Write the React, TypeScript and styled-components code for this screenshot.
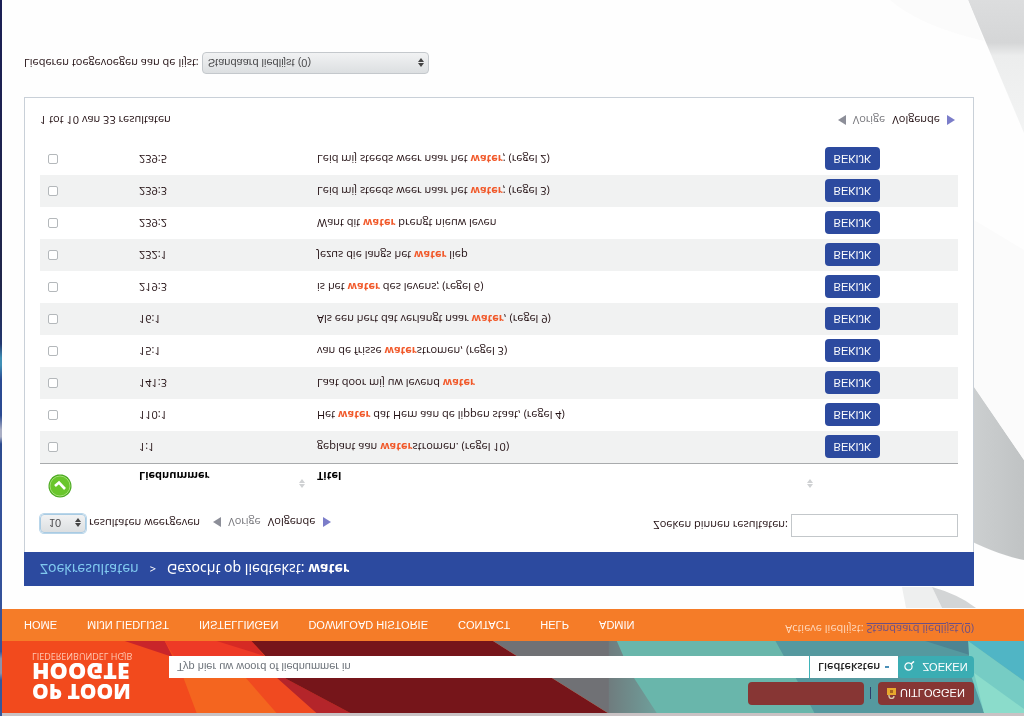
import React from 'react';
import styled, { createGlobalStyle } from 'styled-components';

const controlFont = '"Liberation Sans", Arial, sans-serif';

const GlobalStyle = createGlobalStyle`
  * { box-sizing: border-box; }
  body {
    margin: 0;
    background: #fefefe;
    color: #200d10;
    font-family: "Open Sans", "Noto Sans", sans-serif;
    font-size: 11px;
    line-height: 16px;
  }
  button, input, select { font: inherit; color: inherit; margin: 0; }
`;

/* The whole page is mirrored over its horizontal axis. */
const Page = styled.div`
  position: relative;
  display: flex;
  flex-direction: column;
  min-height: 100vh;
  padding-left: 2px;
  transform: scaleY(-1);
  background: linear-gradient(
      #34579c 0 5%, #8b93ad 6% 8%, #34529a 9% 30%, #2c4a8e 38%,
      #a9aec4 39% 40%, #2a4a92 42% 47%, #3f8fb5 49% 50%, #23376f 52%,
      #20264a 60%, #1b1f55 100%
    ) left / 2px 100% no-repeat;
`;

const Backdrop = styled.svg`
  position: absolute;
  inset: 0;
  width: 100%;
  height: 100%;
  z-index: -1;
`;

const Header = styled.header`
  position: relative;
  display: grid;
  grid-template-columns: 137px 1fr;
  border-top: 3px solid #c9c2c4;
  padding: 8px 50px 0 30px;
  height: 75px;
  color: #fff;
`;

const Logo = styled.a`
  display: flex;
  flex-direction: column;
  padding-top: 3px;
  color: #fff;
  text-decoration: none;
  font: 800 21px/20px "Open Sans", sans-serif;
`;

const LogoLarge = styled.span`
  font-size: 23px;
`;

const LogoSub = styled.small`
  font: 400 9px/12px "Open Sans", sans-serif;
  color: #ffc9b4;
`;

const HeaderTools = styled.div`
  display: flex;
  flex-direction: column;
  gap: 4px;
`;

const AccountRow = styled.div`
  display: flex;
  justify-content: flex-end;
  align-items: center;
  gap: 6px;
  height: 23px;
`;

const UserBadge = styled.div`
  width: 116px;
  height: 23px;
  border-radius: 4px;
  background: #873634;
`;

const Separator = styled.span`
  width: 1px;
  height: 12px;
  margin-right: 1px;
  background: #2c3f6c;
`;

const LogoutButton = styled.button`
  display: flex;
  align-items: center;
  justify-content: center;
  gap: 4px;
  width: 96px;
  height: 23px;
  border: 0;
  padding: 0;
  border-radius: 4px;
  background: #873634;
  color: #fff;
  font-family: ${controlFont};
`;

const SearchForm = styled.form`
  display: flex;
  height: 22px;
`;

const SearchInput = styled.input`
  flex: 1;
  min-width: 0;
  border: 0;
  padding: 0 8px;
  background: #fff;
  color: #333;
  font-family: ${controlFont};
  &::placeholder { color: #6c7279; opacity: 1; }
`;

const ScopeWrap = styled.div`
  position: relative;
  display: flex;
  align-items: center;
  width: 89px;
  background: #fff;
  border-left: 1px solid #3fb3b8;
  color: #222;
`;

const ScopeSelect = styled.select`
  appearance: none;
  width: 100%;
  height: 22px;
  border: 0;
  padding: 0 8px;
  background: transparent;
  font-weight: 600;
`;

const ScopeMark = styled.span`
  position: absolute;
  right: 9px;
  width: 4px;
  height: 2px;
  background: #4a90b8;
  pointer-events: none;
`;

const SearchButton = styled.button`
  display: flex;
  align-items: center;
  justify-content: center;
  gap: 7px;
  width: 76px;
  border: 0;
  padding: 0;
  border-radius: 4px;
  background: #3badb3;
  color: #fff;
  font-family: ${controlFont};
`;

const Nav = styled.nav`
  display: flex;
  align-items: center;
  gap: 30px;
  height: 32px;
  padding: 0 50px 0 22px;
  background: #f57c28;
`;

const NavLink = styled.a`
  color: #fff;
  text-decoration: none;
  white-space: nowrap;
  font-family: ${controlFont};
`;

const ActiveList = styled.p`
  margin: 0 0 0 auto;
  padding-bottom: 9px;
  color: #ffd9bd;
  white-space: nowrap;
  a { color: #6b4f86; }
`;

const Main = styled.main`
  padding: 23px 50px 0 22px;
`;

const TitleBar = styled.h1`
  display: flex;
  align-items: center;
  gap: 11px;
  height: 34px;
  margin: 0;
  padding: 0 16px;
  background: #2c4a9f;
  color: #fff;
  font: 400 14px/20px "Noto Sans", sans-serif;
  a { color: #7fc8ee; text-decoration: none; }
  small { font-size: 11px; }
`;

const Panel = styled.section`
  border: 1px solid #c9d0d8;
  border-top: 0;
  padding: 15px 15px 14px;
  background: #fff;
`;

const Toolbar = styled.div`
  display: flex;
  align-items: flex-end;
  height: 23px;
  margin-bottom: 14px;
`;

const Field = styled.label`
  display: flex;
  align-items: center;
  gap: 3px;
  white-space: nowrap;
`;

const SelectWrap = styled.span<{ $width: number; $height: number }>`
  position: relative;
  display: flex;
  width: ${(p) => p.$width}px;
  height: ${(p) => p.$height}px;
  svg { position: absolute; right: 5px; top: 50%; margin-top: -4px; pointer-events: none; }
`;

const GreySelect = styled.select<{ $focus?: boolean }>`
  appearance: none;
  width: 100%;
  border: 1px solid ${(p) => (p.$focus ? '#a9cbe3' : '#c4c8cc')};
  box-shadow: ${(p) => (p.$focus ? '0 0 0 1px #b9d6ea' : 'none')};
  border-radius: 4px;
  padding: 0 ${(p) => (p.$focus ? 8 : 5)}px;
  background: linear-gradient(#dcdfe1, #f1f2f3);
  color: #4c4c4e;
  font-family: ${controlFont};
`;

const Pager = styled.nav`
  display: flex;
  align-items: center;
  gap: 7px;
`;

const PagerButton = styled.button<{ $muted?: boolean }>`
  display: flex;
  align-items: center;
  gap: 6px;
  border: 0;
  padding: 0;
  background: none;
  color: ${(p) => (p.$muted ? '#77777c' : '#200d10')};
`;

const FilterInput = styled.input`
  width: 167px;
  height: 23px;
  border: 1px solid #c3c7ca;
  padding: 0 6px;
  background: #fff;
`;

const Table = styled.table`
  width: 100%;
  table-layout: fixed;
  border-collapse: separate;
  border-spacing: 0;
  th, td { padding: 0; text-align: left; }
  th { height: 37px; vertical-align: top; border-bottom: 1px solid #a9abad; color: #000; }
  td { height: 32px; }
  tbody tr:nth-child(odd) { background: #f1f2f2; }
  mark { background: none; color: #f1592a; font-weight: 700; }
`;

const Column = styled.col<{ $width?: number }>`
  width: ${(p) => (p.$width ? `${p.$width}px` : 'auto')};
`;

const SortHead = styled.div`
  display: flex;
  align-items: flex-start;
  justify-content: space-between;
  padding: 12px 12px 0 0;
  span { padding-top: 4px; }
`;

const SelectAll = styled.button`
  display: block;
  border: 0;
  margin: 2px 0 0 8px;
  padding: 0;
  background: none;
  svg { display: block; }
`;

const RowCheck = styled.input`
  appearance: none;
  display: block;
  width: 10px;
  height: 10px;
  margin-left: 8px;
  border: 1px solid #b4b8bb;
  border-radius: 2px;
  background: #fff;
`;

const ViewButton = styled.button`
  display: block;
  width: 55px;
  height: 23px;
  border: 0;
  padding: 0;
  border-radius: 4px;
  background: #2c4a9f;
  color: #fff;
  font-family: ${controlFont};
`;

const Summary = styled.div`
  display: flex;
  align-items: center;
  justify-content: space-between;
  height: 16px;
  margin-top: 15px;
  padding-right: 3px;
`;

const AddRow = styled.div`
  padding: 23px 0 28px;
  display: flex;
`;

type Part = string | { hit: string };
const w: Part = { hit: 'water' };

const songs: { number: string; title: Part[] }[] = [
  { number: '1:1', title: ['geplant aan ', w, 'stromen. (regel 10)'] },
  { number: '110:1', title: ['Het ', w, ' dat Hem aan de lippen staat, (regel 4)'] },
  { number: '141:3', title: ['Laat door mij uw levend ', w] },
  { number: '15:1', title: ['van de frisse ', w, 'stromen, (regel 3)'] },
  { number: '16:1', title: ['Als een hert dat verlangt naar ', w, ', (regel 9)'] },
  { number: '219:3', title: ['is het ', w, ' des levens; (regel 6)'] },
  { number: '232:1', title: ['Jezus die langs het ', w, ' liep'] },
  { number: '239:2', title: ['Want dit ', w, ' brengt nieuw leven'] },
  { number: '239:3', title: ['Leid mij steeds weer naar het ', w, '; (regel 3)'] },
  { number: '239:5', title: ['Leid mij steeds weer naar het ', w, '; (regel 2)'] },
];

const menu = ['HOME', 'MIJN LIEDLIJST', 'INSTELLINGEN', 'DOWNLOAD HISTORIE', 'CONTACT', 'HELP', 'ADMIN'];

const PageShapes = () => (
  <Backdrop viewBox="0 0 1024 716" preserveAspectRatio="none" aria-hidden="true">
    <defs>
      <linearGradient id="corner" x1="0" y1="0" x2="0" y2="1">
        <stop offset="0" stopColor="#f3f4f4" />
        <stop offset="0.58" stopColor="#eceded" />
        <stop offset="0.68" stopColor="#d5d6d7" />
        <stop offset="1" stopColor="#dcddde" />
      </linearGradient>
      <linearGradient id="fold" x1="0" y1="0" x2="1" y2="0">
        <stop offset="0" stopColor="#cfd2d3" />
        <stop offset="1" stopColor="#c0c3c4" />
      </linearGradient>
    </defs>
    <path d="M902 129 L932 129 L942 108 L906 108Z" fill="#eeefef" />
    <path d="M932 129 Q958 122 976 108 L942 108Z" fill="#d3d5d6" />
    <path d="M960 350 L1024 256 L1024 156 Q1000 160 960 180Z" fill="url(#fold)" />
    <path d="M974 329 L1024 256 L1024 466 L974 496Z" fill="#fbfbfb" />
    <path d="M968 716 L1024 716 L1024 583Z" fill="url(#corner)" />
    <path d="M890 716 L968 716 L984 675 Q920 690 890 716Z" fill="#fbfbfb" />
  </Backdrop>
);

const HeaderShapes = () => (
  <Backdrop viewBox="0 0 1024 72" preserveAspectRatio="none" aria-hidden="true">
    <defs>
      <linearGradient id="haze" x1="0" y1="0" x2="1" y2="0">
        <stop offset="0" stopColor="#6f7c7e" />
        <stop offset="1" stopColor="#6f9f9b" />
      </linearGradient>
    </defs>
    <path d="M0 0H620V72H0Z" fill="#f24a1d" />
    <path d="M195 0 L180 40 L240 40 L298 0Z" fill="#f4651f" />
    <path d="M240 40 L285 34 L317 0 L275 0Z" fill="#f04a20" />
    <path d="M123 72H163L171 56Z" fill="#c9252a" />
    <path d="M163 72H250L270 48H178Z" fill="#ee3a26" />
    <path d="M215 72H250L263 57Z" fill="#d62a24" />
    <path d="M275 45 L285 34 L349 0 L315 0 L270 40Z" fill="#b4252a" />
    <path d="M250 72H492L607 0H349L285 34Z" fill="#76151a" />
    <path d="M492 72H616V0H607Z" fill="#707175" />
    <path d="M610 0H1024V72H614L608 40Z" fill="#69b6ab" />
    <path d="M608 0H656L630 40L616 72H608Z" fill="url(#haze)" />
    <path d="M775 72H968L984 0H814L790 45Z" fill="#55999f" />
    <path d="M925 72H968L976 56Z" fill="#4d8492" />
    <path d="M968 72H1024V32Z" fill="#50b5c5" />
    <path d="M968 72L1024 32V0H984L970 40Z" fill="#76ccc4" />
    <path d="M974 40L1024 4V0H984Z" fill="#8bdccb" />
  </Backdrop>
);

const Arrow = ({ left }: { left?: boolean }) => (
  <svg width="9" height="10" viewBox="0 0 9 10" aria-hidden="true">
    <path d={left ? 'M8 0V10L0 5Z' : 'M1 0V10L9 5Z'} fill={left ? '#8c8e98' : '#7b7dc9'} />
  </svg>
);

const UpDown = ({ color = '#444' }: { color?: string }) => (
  <svg width="6" height="9" viewBox="0 0 6 9" aria-hidden="true">
    <path d="M3 0L6 4H0ZM0 5H6L3 9Z" fill={color} />
  </svg>
);

const PageButtons = () => (
  <Pager aria-label="Pagina's">
    <PagerButton type="button" $muted><Arrow left />Vorige</PagerButton>
    <PagerButton type="button">Volgende<Arrow /></PagerButton>
  </Pager>
);

const CountField = styled(Field)`
  margin-right: 13px;
`;

const FilterField = styled(Field)`
  margin-left: auto;
`;

export default function App() {
  return (
    <Page>
      <GlobalStyle />
      <PageShapes />
      <Header>
        <HeaderShapes />
        <Logo href="#">
          <span>OP TOON</span>
          <LogoLarge>HOOGTE</LogoLarge>
          <LogoSub>LIEDERENBUNDEL HGJB</LogoSub>
        </Logo>
        <HeaderTools>
          <AccountRow>
            <UserBadge />
            <Separator />
            <LogoutButton type="button">
              <svg width="9" height="11" viewBox="0 0 9 11" aria-hidden="true">
                <path d="M2 5V3a2.5 2.5 0 0 1 5 0" fill="none" stroke="#d9c9a8" strokeWidth="1.4" />
                <path d="M0 4H9V11H0Z" fill="#e8a82c" />
                <path d="M3 6H6V9H3Z" fill="#a8641e" />
              </svg>
              UITLOGGEN
            </LogoutButton>
          </AccountRow>
          <SearchForm onSubmit={(e) => e.preventDefault()}>
            <SearchInput aria-label="Zoeken" placeholder="Typ hier uw woord of liednummer in" />
            <ScopeWrap>
              <ScopeSelect aria-label="Zoeken in">
                <option>Liedteksten</option>
              </ScopeSelect>
              <ScopeMark />
            </ScopeWrap>
            <SearchButton type="submit">
              <svg width="11" height="11" viewBox="0 0 11 11" aria-hidden="true">
                <circle cx="4.5" cy="5.5" r="3.6" fill="none" stroke="#fff" strokeWidth="1.2" />
                <path d="M7 8L10 10.5" stroke="#fff" strokeWidth="1.6" />
              </svg>
              ZOEKEN
            </SearchButton>
          </SearchForm>
        </HeaderTools>
      </Header>
      <Nav>
        {menu.map((item) => (
          <NavLink key={item} href="#">{item}</NavLink>
        ))}
        <ActiveList>
          Actieve liedlijst: <a href="#">Standaard liedlijst (0)</a>
        </ActiveList>
      </Nav>
      <Main>
        <TitleBar>
          <a href="#">Zoekresultaten</a>
          <small>&gt;</small>
          <span>Gezocht op liedtekst: <b>water</b></span>
        </TitleBar>
        <Panel>
          <Toolbar>
            <CountField>
              <SelectWrap $width={46} $height={19}>
                <GreySelect $focus>
                  <option>10</option>
                </GreySelect>
                <UpDown />
              </SelectWrap>
              resultaten weergeven
            </CountField>
            <PageButtons />
            <FilterField>
              Zoeken binnen resultaten:
              <FilterInput type="text" />
            </FilterField>
          </Toolbar>
          <Table>
            <colgroup>
              <Column $width={99} />
              <Column $width={178} />
              <Column />
              <Column $width={133} />
            </colgroup>
            <thead>
              <tr>
                <th>
                  <SelectAll type="button" aria-label="Alles selecteren">
                    <svg width="24" height="24" viewBox="0 0 24 24" aria-hidden="true">
                      <circle cx="12" cy="12" r="11.5" fill="#4cab22" />
                      <circle cx="12" cy="12" r="10" fill="#69c62c" stroke="#a5df76" strokeWidth="1" />
                      <path d="M7 12L11 15.5L17 9" fill="none" stroke="#fff" strokeWidth="2.6" />
                    </svg>
                  </SelectAll>
                </th>
                <th><SortHead><span>Liednummer</span><UpDown color="#cfd1d3" /></SortHead></th>
                <th><SortHead><span>Titel</span><UpDown color="#cfd1d3" /></SortHead></th>
                <th />
              </tr>
            </thead>
            <tbody>
              {songs.map((song) => (
                <tr key={song.number}>
                  <td><RowCheck type="checkbox" aria-label={song.number} /></td>
                  <td>{song.number}</td>
                  <td>
                    {song.title.map((part, i) =>
                      typeof part === 'string' ? part : <mark key={i}>{part.hit}</mark>
                    )}
                  </td>
                  <td><ViewButton type="button">BEKIJK</ViewButton></td>
                </tr>
              ))}
            </tbody>
          </Table>
          <Summary>
            1 tot 10 van 33 resultaten
            <PageButtons />
          </Summary>
        </Panel>
        <AddRow>
          <Field>
            Liederen toegevoegen aan de lijst:
            <SelectWrap $width={227} $height={22}>
              <GreySelect>
                <option>Standaard liedlijst (0)</option>
              </GreySelect>
              <UpDown />
            </SelectWrap>
          </Field>
        </AddRow>
      </Main>
    </Page>
  );
}
